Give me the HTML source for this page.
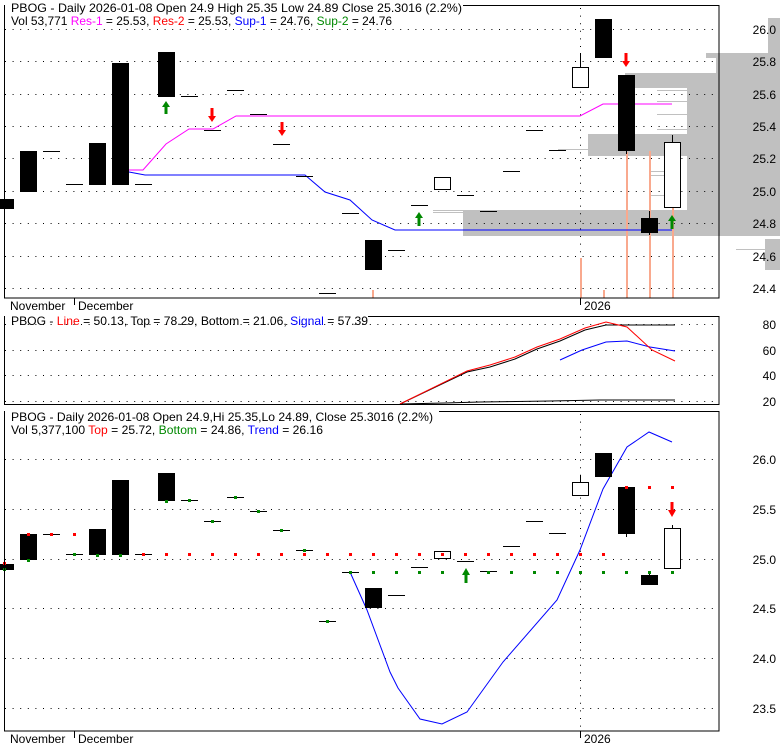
<!DOCTYPE html>
<html><head><meta charset="utf-8"><style>
html,body{margin:0;padding:0;background:#fff;}
svg{display:block;font-family:"Liberation Sans",Arial,sans-serif;}
</style></head><body>
<svg width="780" height="745" viewBox="0 0 780 745" xmlns="http://www.w3.org/2000/svg">
<rect width="780" height="745" fill="#fff"/>
<g fill="#c0c0c0">
<rect x="768" y="18" width="12" height="36"/>
<rect x="706" y="53" width="74" height="5"/>
<rect x="716" y="58" width="64" height="16"/>
<rect x="625" y="73" width="155" height="15"/>
<rect x="687" y="88" width="93" height="46"/>
<rect x="588" y="134" width="192" height="22"/>
<rect x="687" y="156" width="93" height="54"/>
<rect x="463" y="210" width="317" height="26"/>
<rect x="765" y="239" width="15" height="31"/>
</g>
<g stroke="#c0c0c0" stroke-width="1">
<line x1="657" y1="90.5" x2="687" y2="90.5"/><line x1="657" y1="101.5" x2="687" y2="101.5"/>
<line x1="657" y1="114.5" x2="687" y2="114.5"/><line x1="657" y1="129.5" x2="687" y2="129.5"/>
<line x1="650" y1="171.5" x2="664" y2="171.5"/><line x1="650" y1="175.5" x2="664" y2="175.5"/><line x1="650" y1="195.5" x2="664" y2="195.5"/>
<line x1="433" y1="210.5" x2="463" y2="210.5"/><line x1="433" y1="212.5" x2="463" y2="212.5"/>
<line x1="558" y1="149.5" x2="588" y2="149.5"/>
<line x1="736" y1="249.5" x2="765" y2="249.5"/>
</g>
<g stroke="#000" stroke-width="1" stroke-dasharray="1 6.6">
<line x1="5" y1="29.5" x2="719" y2="29.5"/><line x1="5" y1="61.5" x2="719" y2="61.5"/>
<line x1="5" y1="94.5" x2="719" y2="94.5"/><line x1="5" y1="126.5" x2="719" y2="126.5"/>
<line x1="5" y1="158.5" x2="719" y2="158.5"/><line x1="5" y1="191.5" x2="719" y2="191.5"/>
<line x1="5" y1="223.5" x2="719" y2="223.5"/><line x1="5" y1="256.5" x2="719" y2="256.5"/>
<line x1="5" y1="288.5" x2="719" y2="288.5"/>
<line x1="580.5" y1="8" x2="580.5" y2="298"/>
</g>
<g stroke="#f9a98e" stroke-width="2">
<line x1="581" y1="258" x2="581" y2="298"/><line x1="604" y1="290" x2="604" y2="298"/>
<line x1="627" y1="152" x2="627" y2="298"/><line x1="650" y1="151" x2="650" y2="298"/>
<line x1="673" y1="208" x2="673" y2="298"/><line x1="373" y1="290" x2="373" y2="298"/>
</g>
<polyline fill="none" stroke="#f0f" stroke-width="1" points="129,170 143,170 166,144 189,129 213,129 236,116 580,116 603,104 672,104"/>
<polyline fill="none" stroke="#00f" stroke-width="1" points="129,172 145,175 305,175 325,192 350,200 372,220 395,230 672,230"/>
<g fill="#000">
<rect x="0" y="199" width="14" height="10"/>
<rect x="20" y="151" width="17" height="41"/>
<rect x="89" y="143" width="17" height="42"/>
<rect x="112" y="63" width="17" height="122"/>
<rect x="158" y="52" width="17" height="45"/>
<rect x="365" y="240" width="17" height="30"/>
<rect x="595" y="19" width="17" height="39"/>
<rect x="618" y="75" width="17" height="76"/>
<rect x="641" y="218" width="17" height="15"/>
</g>
<g stroke="#000" stroke-width="1">
<line x1="43" y1="151.5" x2="60" y2="151.5"/><line x1="66" y1="184.5" x2="83" y2="184.5"/>
<line x1="135" y1="184.5" x2="152" y2="184.5"/><line x1="181" y1="96.5" x2="198" y2="96.5"/>
<line x1="204" y1="130.5" x2="221" y2="130.5"/><line x1="227" y1="90.5" x2="244" y2="90.5"/>
<line x1="250" y1="114.5" x2="267" y2="114.5"/><line x1="273" y1="144.5" x2="290" y2="144.5"/>
<line x1="296" y1="176.5" x2="313" y2="176.5"/><line x1="319" y1="293.5" x2="336" y2="293.5"/>
<line x1="342" y1="213.5" x2="359" y2="213.5"/><line x1="388" y1="250.5" x2="405" y2="250.5"/>
<line x1="411" y1="205.5" x2="428" y2="205.5"/><line x1="457" y1="195.5" x2="474" y2="195.5"/>
<line x1="480" y1="211.5" x2="497" y2="211.5"/><line x1="503" y1="171.5" x2="520" y2="171.5"/>
<line x1="526" y1="130.5" x2="543" y2="130.5"/><line x1="549" y1="150.5" x2="566" y2="150.5"/>
<line x1="580.5" y1="53" x2="580.5" y2="67"/><line x1="626.5" y1="151" x2="626.5" y2="154"/>
<line x1="649.5" y1="211" x2="649.5" y2="235"/><line x1="672.5" y1="135" x2="672.5" y2="142"/>
</g>
<g fill="#fff" stroke="#000" stroke-width="1">
<rect x="434.5" y="177.5" width="16" height="12"/>
<rect x="572.5" y="67.5" width="16" height="20"/>
<rect x="664.5" y="142.5" width="16" height="65"/>
</g>
<g fill="#080">
<path d="M166 101 L170 107 L167.5 107 L167.5 114 L164.5 114 L164.5 107 L162 107Z"/>
<path d="M419 212 L423 218 L420.5 218 L420.5 226 L417.5 226 L417.5 218 L415 218Z"/>
<path d="M672 215 L676 221 L673.5 221 L673.5 229 L670.5 229 L670.5 221 L668 221Z"/>
</g>
<g fill="#f00">
<path d="M212 122 L216 116 L213.5 116 L213.5 108 L210.5 108 L210.5 116 L208 116Z"/>
<path d="M282 136 L286 130 L283.5 130 L283.5 122 L280.5 122 L280.5 130 L278 130Z"/>
<path d="M626 67 L630 61 L627.5 61 L627.5 53 L624.5 53 L624.5 61 L622 61Z"/>
</g>
<rect x="4.5" y="5.5" width="714.5" height="292.5" fill="none" stroke="#000"/>
<rect x="5" y="0" width="458" height="12" fill="#fff"/>
<text x="11" y="12" font-size="12" textLength="451" lengthAdjust="spacingAndGlyphs">PBOG - Daily 2026-01-08 Open 24.9  High 25.35  Low 24.89  Close 25.3016 (2.2%)</text>
<text x="11" y="25" font-size="12" textLength="381" lengthAdjust="spacingAndGlyphs">Vol 53,771 <tspan fill="#f0f">Res-1</tspan> = 25.53, <tspan fill="#f00">Res-2</tspan> = 25.53, <tspan fill="#00f">Sup-1</tspan> = 24.76, <tspan fill="#080">Sup-2</tspan> = 24.76</text>
<g font-size="12" text-anchor="end">
<text x="776" y="34">26.0</text><text x="776" y="66">25.8</text><text x="776" y="99">25.6</text>
<text x="776" y="131">25.4</text><text x="776" y="163">25.2</text><text x="776" y="196">25.0</text>
<text x="776" y="228">24.8</text><text x="776" y="261">24.6</text><text x="776" y="293">24.4</text>
</g>
<g font-size="12">
<text x="10" y="310">November</text><text x="78" y="310">December</text><text x="584" y="310">2026</text>
</g>
<line x1="74.5" y1="298" x2="74.5" y2="305" stroke="#000"/><line x1="580.5" y1="298" x2="580.5" y2="305" stroke="#000"/>

<g stroke="#000" stroke-dasharray="1 6.6">
<line x1="5" y1="324.5" x2="719" y2="324.5"/><line x1="5" y1="350.5" x2="719" y2="350.5"/>
<line x1="5" y1="375.5" x2="719" y2="375.5"/><line x1="5" y1="401.5" x2="719" y2="401.5"/>
</g>
<polyline fill="none" stroke="#000" points="400,404 445,403 480,402 550,401 600,400 675,400"/>
<polyline fill="none" stroke="#000" points="400,404 467,372 490,367 515,359 537,349 560,341 585,330 606,325 675,325"/>
<polyline fill="none" stroke="#00f" points="560,360 582,350 606,342 627,341 650,347 675,351"/>
<polyline fill="none" stroke="#f00" points="400,404 467,371 490,365 515,357 537,347 560,339 585,328 606,322 627,327 652,350 675,361"/>
<rect x="4.5" y="316.5" width="714.5" height="88" fill="none" stroke="#000"/>
<rect x="5" y="312" width="363" height="10" fill="#fff"/>
<text x="11" y="325" font-size="12" textLength="357" lengthAdjust="spacingAndGlyphs">PBOG - <tspan fill="#f00">Line</tspan> = 50.13, Top = 78.29, Bottom = 21.06, <tspan fill="#00f">Signal</tspan> = 57.39</text>
<g font-size="12" text-anchor="end">
<text x="776" y="329">80</text><text x="776" y="355">60</text><text x="776" y="380">40</text><text x="776" y="406">20</text>
</g>

<g stroke="#000" stroke-dasharray="1 6.6">
<line x1="5" y1="459.5" x2="719" y2="459.5"/><line x1="5" y1="509.5" x2="719" y2="509.5"/>
<line x1="5" y1="559.5" x2="719" y2="559.5"/><line x1="5" y1="608.5" x2="719" y2="608.5"/>
<line x1="5" y1="658.5" x2="719" y2="658.5"/><line x1="5" y1="708.5" x2="719" y2="708.5"/>
<line x1="580.5" y1="414" x2="580.5" y2="731"/>
</g>
<polyline fill="none" stroke="#00f" points="350,572 367,610 390,672 398,688 420,719 442,724 467,712 503,662 557,600 580,550 603,489 627,447 649,432 672,442"/>
<g fill="#000">
<rect x="0" y="564" width="14" height="6"/>
<rect x="20" y="534" width="17" height="26"/>
<rect x="89" y="529" width="17" height="26"/>
<rect x="112" y="480" width="17" height="75"/>
<rect x="158" y="473" width="17" height="28"/>
<rect x="365" y="588" width="17" height="20"/>
<rect x="595" y="453" width="17" height="24"/>
<rect x="618" y="487" width="17" height="47"/>
<rect x="641" y="575" width="17" height="10"/>
</g>
<g stroke="#000">
<line x1="43" y1="534.5" x2="60" y2="534.5"/><line x1="66" y1="554.5" x2="83" y2="554.5"/>
<line x1="135" y1="554.5" x2="152" y2="554.5"/><line x1="181" y1="500.5" x2="198" y2="500.5"/>
<line x1="204" y1="521.5" x2="221" y2="521.5"/><line x1="227" y1="497.5" x2="244" y2="497.5"/>
<line x1="250" y1="511.5" x2="267" y2="511.5"/><line x1="273" y1="530.5" x2="290" y2="530.5"/>
<line x1="296" y1="550.5" x2="313" y2="550.5"/><line x1="319" y1="621.5" x2="336" y2="621.5"/>
<line x1="342" y1="572.5" x2="359" y2="572.5"/><line x1="388" y1="595.5" x2="405" y2="595.5"/>
<line x1="411" y1="567.5" x2="428" y2="567.5"/><line x1="457" y1="561.5" x2="474" y2="561.5"/>
<line x1="480" y1="571.5" x2="497" y2="571.5"/><line x1="503" y1="546.5" x2="520" y2="546.5"/>
<line x1="526" y1="521.5" x2="543" y2="521.5"/><line x1="549" y1="533.5" x2="566" y2="533.5"/>
<line x1="580.5" y1="475" x2="580.5" y2="482"/><line x1="626.5" y1="534" x2="626.5" y2="537"/>
<line x1="649.5" y1="572" x2="649.5" y2="575"/><line x1="672.5" y1="525" x2="672.5" y2="528"/>
</g>
<g fill="#fff" stroke="#000">
<rect x="434.5" y="551.5" width="16" height="7"/>
<rect x="572.5" y="482.5" width="16" height="13"/>
<rect x="664.5" y="528.5" width="16" height="40"/>
</g>
<g fill="#f00">
<rect x="3" y="562" width="3" height="3"/><rect x="27" y="533" width="3" height="3"/><rect x="50" y="533" width="3" height="3"/><rect x="73" y="533" width="3" height="3"/>
<rect x="142" y="553" width="3" height="3"/><rect x="165" y="553" width="3" height="3"/><rect x="188" y="553" width="3" height="3"/><rect x="211" y="553" width="3" height="3"/>
<rect x="234" y="553" width="3" height="3"/><rect x="257" y="553" width="3" height="3"/><rect x="280" y="553" width="3" height="3"/><rect x="303" y="553" width="3" height="3"/>
<rect x="326" y="553" width="3" height="3"/><rect x="349" y="553" width="3" height="3"/><rect x="372" y="553" width="3" height="3"/><rect x="395" y="553" width="3" height="3"/>
<rect x="418" y="553" width="3" height="3"/><rect x="441" y="553" width="3" height="3"/><rect x="464" y="553" width="3" height="3"/><rect x="487" y="553" width="3" height="3"/>
<rect x="510" y="553" width="3" height="3"/><rect x="533" y="553" width="3" height="3"/><rect x="556" y="553" width="3" height="3"/><rect x="579" y="553" width="3" height="3"/>
<rect x="602" y="553" width="3" height="3"/>
<rect x="625" y="486" width="3" height="3"/><rect x="648" y="486" width="3" height="3"/><rect x="671" y="486" width="3" height="3"/>
</g>
<g fill="#080">
<rect x="3" y="568" width="3" height="3"/><rect x="27" y="559" width="3" height="3"/><rect x="73" y="553" width="3" height="3"/><rect x="96" y="554" width="3" height="3"/>
<rect x="119" y="554" width="3" height="3"/><rect x="165" y="500" width="3" height="3"/><rect x="188" y="499" width="3" height="3"/><rect x="211" y="520" width="3" height="3"/>
<rect x="234" y="496" width="3" height="3"/><rect x="257" y="510" width="3" height="3"/><rect x="280" y="529" width="3" height="3"/><rect x="303" y="549" width="3" height="3"/>
<rect x="326" y="620" width="3" height="3"/><rect x="349" y="571" width="3" height="3"/><rect x="372" y="571" width="3" height="3"/><rect x="395" y="571" width="3" height="3"/>
<rect x="418" y="571" width="3" height="3"/><rect x="441" y="571" width="3" height="3"/><rect x="487" y="571" width="3" height="3"/><rect x="510" y="571" width="3" height="3"/>
<rect x="533" y="571" width="3" height="3"/><rect x="556" y="571" width="3" height="3"/><rect x="579" y="571" width="3" height="3"/><rect x="602" y="571" width="3" height="3"/>
<rect x="625" y="571" width="3" height="3"/><rect x="648" y="571" width="3" height="3"/><rect x="671" y="571" width="3" height="3"/>
<path d="M466 568 L470 575 L467.5 575 L467.5 583 L464.5 583 L464.5 575 L462 575Z"/>
</g>
<path fill="#f00" d="M672 517 L676 510 L673.5 510 L673.5 502 L670.5 502 L670.5 510 L668 510Z"/>
<rect x="4.5" y="411.5" width="714.5" height="319.5" fill="none" stroke="#000"/>
<rect x="5" y="407" width="434" height="10" fill="#fff"/>
<text x="11" y="421" font-size="12" textLength="422" lengthAdjust="spacingAndGlyphs">PBOG - Daily 2026-01-08 Open 24.9,Hi 25.35,Lo 24.89, Close 25.3016 (2.2%)</text>
<text x="11" y="434" font-size="12" textLength="312" lengthAdjust="spacingAndGlyphs">Vol 5,377,100 <tspan fill="#f00">Top</tspan> = 25.72, <tspan fill="#080">Bottom</tspan> = 24.86, <tspan fill="#00f">Trend</tspan> = 26.16</text>
<g font-size="12" text-anchor="end">
<text x="776" y="464">26.0</text><text x="776" y="514">25.5</text><text x="776" y="564">25.0</text>
<text x="776" y="613">24.5</text><text x="776" y="663">24.0</text><text x="776" y="713">23.5</text>
</g>
<g font-size="12">
<text x="10" y="743">November</text><text x="78" y="743">December</text><text x="584" y="743">2026</text>
</g>
<line x1="74.5" y1="731" x2="74.5" y2="738" stroke="#000"/><line x1="580.5" y1="731" x2="580.5" y2="738" stroke="#000"/>
</svg>
</body></html>
